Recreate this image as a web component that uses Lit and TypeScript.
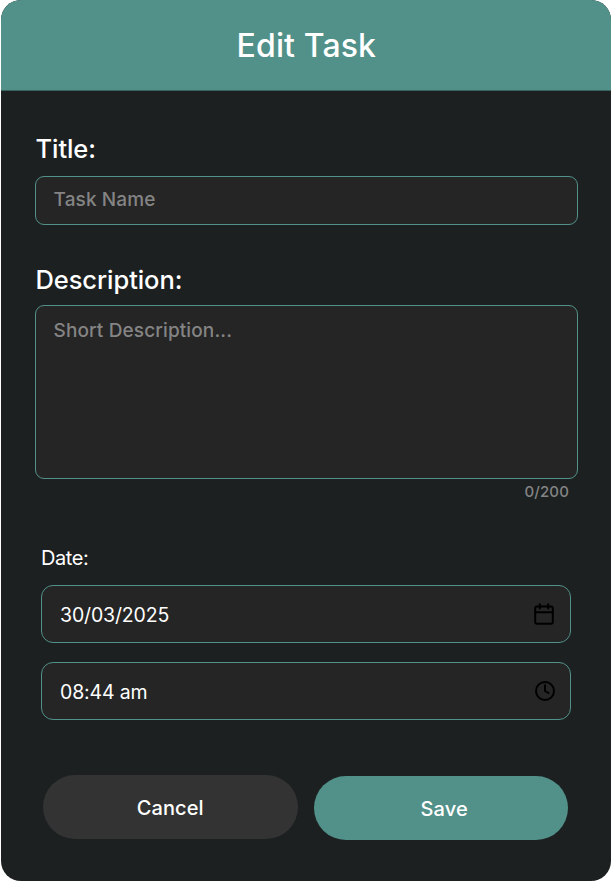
import { LitElement, html, css, svg } from "lit";
import { customElement, state } from "lit/decorators.js";

const calendarIcon = svg`
  <rect x="1.2" y="3.6" width="17.6" height="17.2" rx="2" />
  <path d="M1.2 9.2H18.8M5.8 1.2V5.6M14.2 1.2V5.6" />`;

const clockIcon = svg`
  <circle cx="11" cy="11" r="9" />
  <path d="M11 5.3V11L14.6 13" />`;

@customElement("app-root")
export class AppRoot extends LitElement {
  @state() private date = "30/03/2025";
  @state() private time = "08:44 am";
  @state() private description = "";

  static styles = css`
    :host {
      display: block;
      height: 881px;
      background: #fff;
      font-family: Inter, "Liberation Sans", sans-serif;
      color: #fff;
    }
    * { box-sizing: border-box; }
    .card {
      display: flex;
      flex-direction: column;
      height: 880.5px;
      margin-left: 0.7px;
      border-radius: 20px;
      overflow: hidden;
      background: #1c2021;
    }
    .header {
      flex: none;
      display: flex;
      align-items: center;
      justify-content: center;
      height: 91px;
      padding-top: 2px;
      background: #529189;
      border-bottom: 1px solid #39615d;
      font-size: 32px;
      font-weight: 500;
      letter-spacing: 0.12px;
      line-height: 40px;
    }
    .header span { margin-left: 1px; }
    .form { padding: 42px 33.5px 0 34.3px; }
    .label {
      height: 32px;
      line-height: 32px;
      padding-left: 0.5px;
      font-size: 25.5px;
      font-weight: 500;
      letter-spacing: -0.08px;
    }
    .field {
      display: block;
      width: 100%;
      border: 1.3px solid #529189;
      border-radius: 9px;
      background: #252525;
      color: #848484;
      font-size: 19px;
      font-weight: 500;
      letter-spacing: 0.13px;
      line-height: 24px;
      padding: 11px 17.5px;
    }
    .single { height: 49px; margin: 11px 0 39px; }
    .multi { height: 174px; margin: 9px 0 4px; padding-top: 13px; }
    .count {
      height: 18px;
      padding-right: 8.5px;
      text-align: right;
      line-height: 18px;
      font-size: 15px;
      font-weight: 500;
      letter-spacing: 0.15px;
      color: #848484;
    }
    .when { padding: 44px 7px 0 6px; }
    .when-label {
      height: 26px;
      line-height: 26px;
      font-size: 20px;
      letter-spacing: -0.4px;
      margin-bottom: 14px;
    }
    .picker {
      display: flex;
      align-items: center;
      justify-content: space-between;
      height: 58px;
      margin-bottom: 19px;
      padding: 1px 13.5px 0 18px;
      border: 1.3px solid #529189;
      border-radius: 12px;
      background: #252525;
      font-size: 19.5px;
      letter-spacing: -0.15px;
    }
    .icon {
      width: 22px;
      height: 22px;
      margin-bottom: 2px;
      fill: none;
      stroke: #000;
      stroke-width: 2;
      stroke-linecap: round;
      stroke-linejoin: round;
    }
    .actions { display: flex; gap: 16px; padding: 36px 9.5px 0 8px; }
    .button {
      flex: 1;
      height: 64px;
      padding: 2px 0 0;
      border: 0;
      border-radius: 32px;
      font: 500 20px/24px Inter, "Liberation Sans", sans-serif;
      letter-spacing: 0.1px;
      color: #fff;
    }
    .cancel { background: #333; }
    .save { background: #529189; margin-top: 1px; text-indent: 7px; letter-spacing: 0.2px; }
  `;

  render() {
    return html`
      <div class="card">
        <div class="header"><span>Edit Task</span></div>
        <div class="form">
          <div class="label">Title:</div>
          <div class="field single">Task Name</div>
          <div class="label">Description:</div>
          <div class="field multi">Short Description...</div>
          <div class="count">${this.description.length}/200</div>
          <div class="when">
            <div class="when-label">Date:</div>
            <div class="picker">
              <span>${this.date}</span>
              <svg class="icon" viewBox="0 0 22 22">${calendarIcon}</svg>
            </div>
            <div class="picker">
              <span>${this.time}</span>
              <svg class="icon" viewBox="0 0 22 22">${clockIcon}</svg>
            </div>
          </div>
          <div class="actions">
            <button class="button cancel">Cancel</button>
            <button class="button save">Save</button>
          </div>
        </div>
      </div>
    `;
  }
}
